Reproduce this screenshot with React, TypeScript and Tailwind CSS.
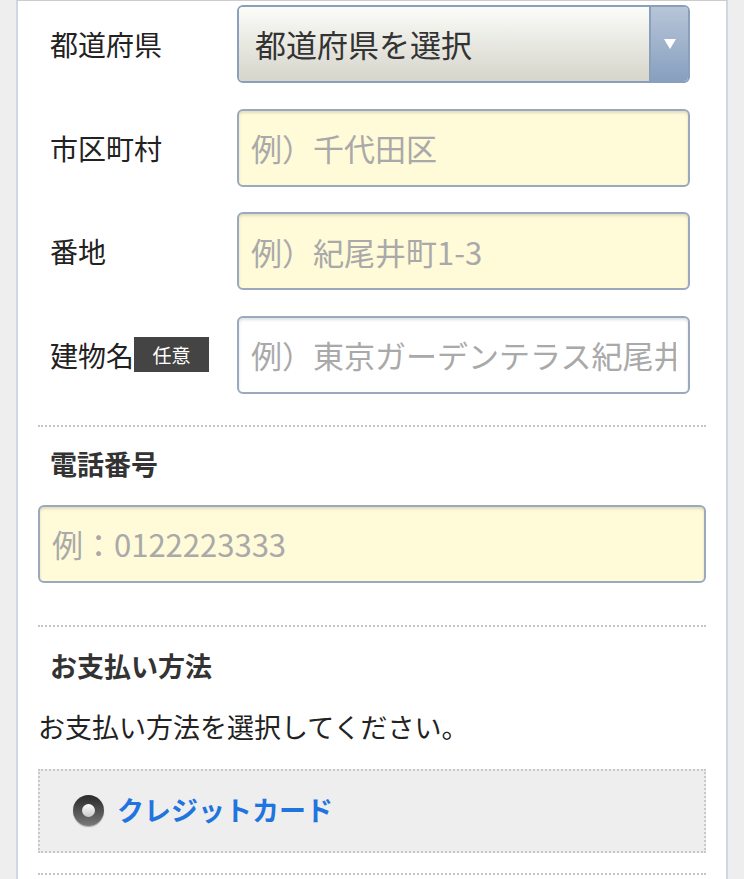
import { type ReactNode } from "react";

const font = { fontFamily: '"Noto Sans CJK JP", "Noto Sans", sans-serif' };

function Row({ label, children }: { label: ReactNode; children: ReactNode }) {
  return (
    <div className="flex items-center h-[78px]">
      <div className="w-[199px] pl-3 flex items-center text-[28px] text-[#222]">{label}</div>
      <div className="w-[453px] h-full">{children}</div>
    </div>
  );
}

function TextInput({ placeholder, white = false }: { placeholder: string; white?: boolean }) {
  return (
    <input
      placeholder={placeholder}
      style={font}
      className={
        "w-full h-full rounded-[6px] border-2 border-[#9ba9bf] px-3 text-[31px] outline-none placeholder:text-[#a9a9a9] shadow-[inset_0_2px_3px_rgba(0,0,0,0.12)] " +
        (white ? "bg-white" : "bg-[#fffad8]")
      }
    />
  );
}

function Divider() {
  return <div className="border-t-2 border-dotted border-[#c4c4c4]" />;
}

export default function App() {
  return (
    <div className="w-[744px] h-[879px] overflow-hidden bg-[#eeeeee]" style={font}>
      <div className="mx-[16px] h-full bg-white border-x-2 border-t border-x-[#cfd6e6] border-t-[#cccccc] px-[20px] pt-[4px]">
        {/* Address rows */}
        <div className="flex flex-col gap-[25.5px]">
          <Row label="都道府県">
            <div className="flex h-full rounded-[6px] border-2 border-[#8a9fbb] overflow-hidden">
              <div className="flex-1 flex items-center pl-4 text-[31px] text-[#333] bg-gradient-to-b from-[#fcfcf9] to-[#d5d5cb]">
                都道府県を選択
              </div>
              <div className="w-[39px] flex items-center justify-center border-l-2 border-[#8a9fbb] bg-gradient-to-b from-[#b7c5d8] to-[#87a0bf]">
                <svg width="14" height="12" viewBox="0 0 14 12">
                  <path d="M1 1h12L7 11z" fill="#ffffff" />
                </svg>
              </div>
            </div>
          </Row>
          <Row label="市区町村">
            <TextInput placeholder="例）千代田区" />
          </Row>
          <Row label="番地">
            <TextInput placeholder="例）紀尾井町1-3" />
          </Row>
          <Row
            label={
              <>
                建物名
                <span className="bg-[#444444] text-white text-[19px] leading-none w-[75px] h-[35px] flex items-center justify-center">
                  任意
                </span>
              </>
            }
          >
            <TextInput placeholder="例）東京ガーデンテラス紀尾井町" white />
          </Row>
        </div>

        <div className="mt-[31px]">
          <Divider />
        </div>

        {/* Phone */}
        <h3 className="mt-[17px] pl-3 text-[27px] leading-[40px] font-bold text-[#333]">電話番号</h3>
        <div className="mt-[21px] h-[78px]">
          <TextInput placeholder="例：0122223333" />
        </div>

        <div className="mt-[42px]">
          <Divider />
        </div>

        {/* Payment */}
        <h3 className="mt-[19px] pl-3 text-[27px] leading-[40px] font-bold text-[#333]">お支払い方法</h3>
        <p className="mt-[21px] text-[27px] leading-[40px] text-[#222]">お支払い方法を選択してください。</p>

        <div className="mt-[22px] h-[84px] border-2 border-dotted border-[#c8c8c8] bg-[#eeeeee] flex items-center pl-[33px] gap-[13px]">
          <span className="w-[31px] h-[31px] rounded-full bg-gradient-to-b from-[#2a2a2a] to-[#7a7a7a] flex items-center justify-center shadow-[0_1px_1px_rgba(0,0,0,0.3)]">
            <span className="w-[13px] h-[13px] rounded-full bg-gradient-to-b from-[#ffffff] to-[#c9c9c9]" />
          </span>
          <span className="text-[27px] font-bold text-[#1f74e0]">クレジットカード</span>
        </div>

        <div className="mt-[20px]">
          <Divider />
        </div>
      </div>
    </div>
  );
}
